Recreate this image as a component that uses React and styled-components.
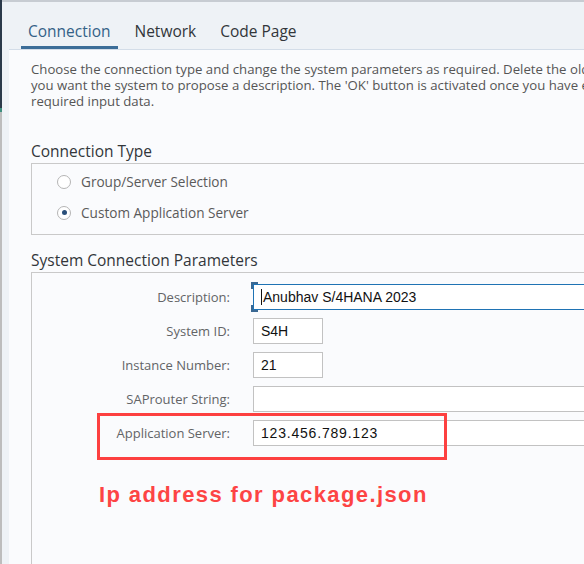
import React from "react";
import styled, { createGlobalStyle } from "styled-components";

const Global = createGlobalStyle`
  html, body { margin: 0; padding: 0; background: #eef2f6; overflow: hidden; }
  * { box-sizing: border-box; }
`;

const Frame = styled.div`
  width: 584px;
  height: 564px;
  display: flex;
  overflow: hidden;
  font-family: "Open Sans", "Noto Sans", sans-serif;
`;

const EdgeBar = styled.div`
  flex: 0 0 2px;
  display: flex;
  flex-direction: column;
`;

const EdgeSeg = styled.div`
  height: ${(p) => (p.$h ? `${p.$h}px` : "auto")};
  flex: ${(p) => (p.$h ? "none" : "1")};
  background: ${(p) => p.$c};
`;

const Main = styled.div`
  flex: 1;
  min-width: 0;
  display: flex;
  flex-direction: column;
  border-top: 2px solid #c7ccd2;
  background: #eef2f6;
`;

const TabBar = styled.div`
  height: 47px;
  display: flex;
  align-items: flex-end;
  padding-left: 19px;
  gap: 10px;
`;

const Tab = styled.div`
  padding: 0 7px;
  height: 31px;
  font-size: 15.5px;
  line-height: 26px;
  color: ${(p) => (p.$active ? "#346187" : "#32363a")};
  border-bottom: 3px solid ${(p) => (p.$active ? "#3b6d98" : "transparent")};
  white-space: nowrap;
`;

const Panel = styled.div`
  flex: 1;
  margin-left: 7px;
  background: #fafbfd;
  border-top: 1px solid #d3dde8;
  padding: 11px 0 0 22px;
  display: flex;
  flex-direction: column;
  overflow: hidden;
`;

const Intro = styled.p`
  margin: 0;
  font-size: 13.2px;
  line-height: 16px;
  color: #555555;
  white-space: nowrap;
`;

const GroupTitle = styled.div`
  margin-top: ${(p) => p.$mt}px;
  font-size: 15.5px;
  line-height: 20px;
  color: #32363a;
  white-space: nowrap;
`;

const GroupBox = styled.div`
  margin-top: 2px;
  border: 1px solid #c9c9c9;
  border-right: none;
  padding: 2px 0 6px 25px;
`;

const RadioRow = styled.div`
  height: 31px;
  display: flex;
  align-items: center;
  gap: 10px;
`;

const Radio = styled.span`
  width: 14px;
  height: 14px;
  border-radius: 50%;
  border: 1px solid #b5b5b5;
  background: #fff;
  display: flex;
  align-items: center;
  justify-content: center;
  &::after {
    content: "";
    width: 5px;
    height: 5px;
    border-radius: 50%;
    background: ${(p) => (p.$checked ? "#2a4f7a" : "transparent")};
  }
`;

const RadioLabel = styled.span`
  font-size: 13.6px;
  color: #5a5a5a;
`;

const ParamBox = styled.div`
  position: relative;
  flex: 1;
  margin-top: 2px;
  border: 1px solid #c9c9c9;
  border-right: none;
  border-bottom: none;
  padding-top: 11px;
`;

const FormGrid = styled.div`
  display: grid;
  grid-template-columns: 198px 1fr;
  column-gap: 23px;
  row-gap: 8px;
  align-items: center;
`;

const FieldLabel = styled.div`
  text-align: right;
  font-size: 13px;
  color: #626466;
  white-space: nowrap;
`;

const Field = styled.div`
  position: relative;
  height: 26px;
  width: ${(p) => (p.$short ? "70px" : "360px")};
  border: 1px solid ${(p) => (p.$focus ? "#1f73b4" : "#c2c2c2")};
  background: #fff;
  font-family: "Liberation Sans", Arial, sans-serif;
  font-size: 14px;
  line-height: 24px;
  letter-spacing: ${(p) => (p.$wide ? "0.8px" : "0")};
  color: #111;
  padding-left: 7px;
  white-space: nowrap;
  ${(p) =>
    p.$focus &&
    `
    &::before, &::after {
      content: "";
      position: absolute;
      left: -3px;
      width: 5px;
      height: 5px;
      border-left: 2px solid #3a6893;
    }
    &::before { top: -3px; border-top: 2px solid #3a6893; }
    &::after { bottom: -3px; border-bottom: 2px solid #3a6893; }
  `}
`;

const Caret = styled.span`
  display: inline-block;
  width: 1px;
  height: 16px;
  margin-right: 1px;
  background: #111;
  vertical-align: -3px;
`;

const Highlight = styled.div`
  position: absolute;
  left: 65px;
  top: 140px;
  width: 350px;
  height: 47px;
  border: 3px solid #fd4040;
  pointer-events: none;
`;

const Annotation = styled.div`
  position: absolute;
  left: 67px;
  top: 209px;
  font-family: "Liberation Sans", Arial, sans-serif;
  font-weight: bold;
  font-size: 22px;
  letter-spacing: 1.4px;
  color: #fd4444;
  white-space: nowrap;
`;

export default function App() {
  return (
    <>
      <Global />
      <Frame>
        <EdgeBar>
          <EdgeSeg $h={108} $c="#2b3a4a" />
          <EdgeSeg $h={4} $c="#3f8f7f" />
          <EdgeSeg $c="#bdbdbd" />
        </EdgeBar>
        <Main>
          <TabBar>
            <Tab $active>Connection</Tab>
            <Tab>Network</Tab>
            <Tab>Code Page</Tab>
          </TabBar>
          <Panel>
            <Intro>
              Choose the connection type and change the system parameters as required. Delete the old description if
              <br />
              you want the system to propose a description. The 'OK' button is activated once you have entered all
              <br />
              required input data.
            </Intro>
            <GroupTitle $mt={32}>Connection Type</GroupTitle>
            <GroupBox>
              <RadioRow>
                <Radio />
                <RadioLabel>Group/Server Selection</RadioLabel>
              </RadioRow>
              <RadioRow>
                <Radio $checked />
                <RadioLabel>Custom Application Server</RadioLabel>
              </RadioRow>
            </GroupBox>
            <GroupTitle $mt={15}>System Connection Parameters</GroupTitle>
            <ParamBox>
              <FormGrid>
                <FieldLabel>Description:</FieldLabel>
                <Field $focus>
                  <Caret />
                  Anubhav S/4HANA 2023
                </Field>
                <FieldLabel>System ID:</FieldLabel>
                <Field $short>S4H</Field>
                <FieldLabel>Instance Number:</FieldLabel>
                <Field $short>21</Field>
                <FieldLabel>SAProuter String:</FieldLabel>
                <Field />
                <FieldLabel>Application Server:</FieldLabel>
                <Field $wide>123.456.789.123</Field>
              </FormGrid>
              <Highlight />
              <Annotation>Ip address for package.json</Annotation>
            </ParamBox>
          </Panel>
        </Main>
      </Frame>
    </>
  );
}
